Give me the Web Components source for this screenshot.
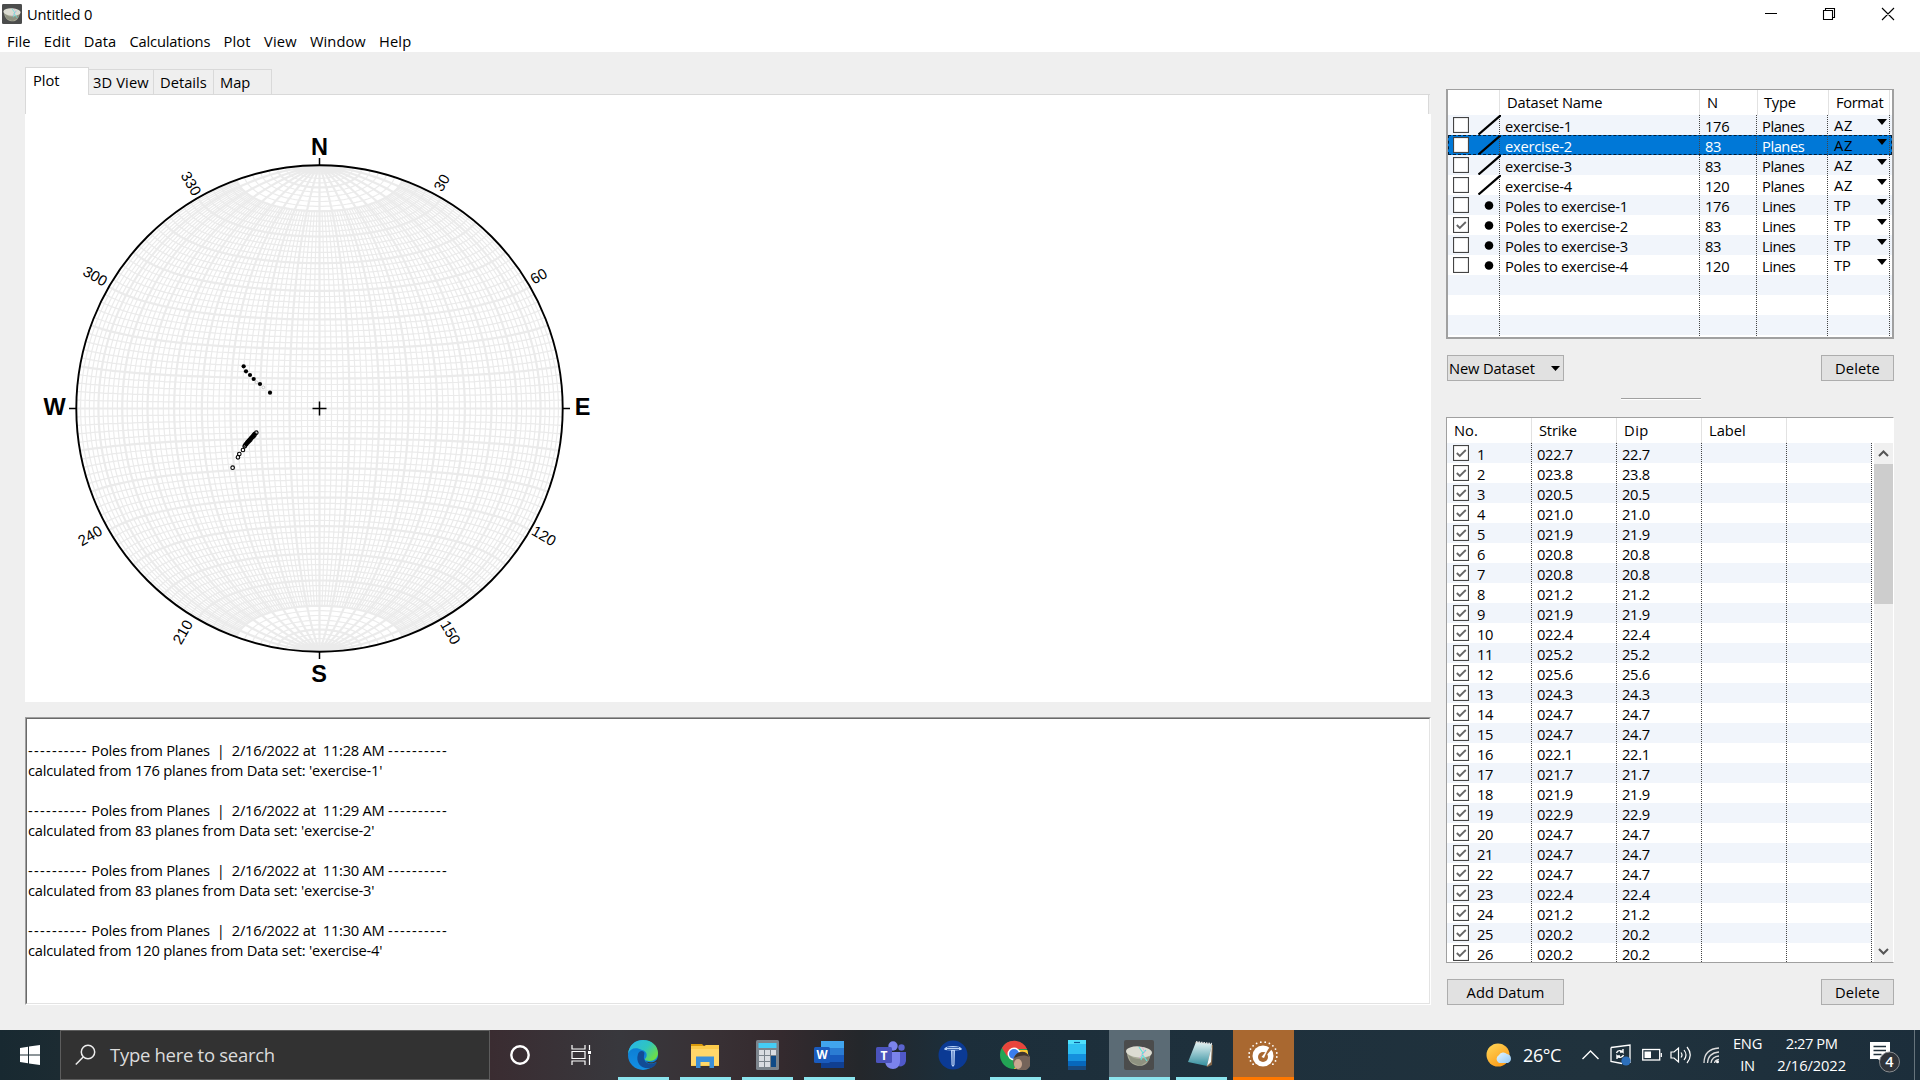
<!DOCTYPE html>
<html lang="en">
<head>
<meta charset="utf-8">
<title>Untitled 0</title>
<style>
html,body{margin:0;padding:0;width:1920px;height:1080px;overflow:hidden}
body{font-family:"Open Sans","Noto Sans",sans-serif;font-size:14.7px;color:#000;background:#efefef}
</style>
</head>
<body>
<stereo-app></stereo-app>
<script>
const define = (name, html, init) => {
  const tpl = document.createElement('template');
  customElements.define(name, class extends HTMLElement {
    connectedCallback() {
      if (this.shadowRoot) return;
      tpl.innerHTML = typeof html === 'function' ? html(this) : html;
      this.attachShadow({mode: 'open'}).append(tpl.content.cloneNode(true));
      if (init) init(this);
    }
  });
};

define('stereo-app', `<style>
:host{display:flex;flex-direction:column;width:1920px;height:1080px;background:#efefef}
main{flex:1;display:flex;padding:15px 25px 0 25px;gap:15px}
.left{width:1406px;display:flex;flex-direction:column}
.right{width:449px;display:flex;flex-direction:column;padding-top:22px}
.bar{display:flex;justify-content:space-between;width:447px;margin-left:1px}
.split{width:80px;height:1px;background:#a0a0a0;border-bottom:1px solid #fff;margin:17px 0 17px 175px}
</style>
<window-bar></window-bar>
<main>
 <div class="left"><tab-strip></tab-strip><stereo-net></stereo-net><console-log></console-log></div>
 <div class="right">
  <dataset-table></dataset-table>
  <div class="bar" style="margin-top:16px"><push-button style="--w:117px" menu><fit-text w="85">New Dataset</fit-text></push-button><push-button style="--w:73px"><fit-text w="44">Delete</fit-text></push-button></div>
  <div class="split"></div>
  <datum-table></datum-table>
  <div class="bar" style="margin-top:16px"><push-button style="--w:117px"><fit-text w="77">Add Datum</fit-text></push-button><push-button style="--w:73px"><fit-text w="44">Delete</fit-text></push-button></div>
 </div>
</main>
<task-bar></task-bar>`);

const bowl = (s) => `<svg width="${s}" height="${s}" viewBox="0 0 30 30" style="display:block"><rect width="30" height="30" rx="2" fill="#4b4c4c"/><path d="M3 12c0 9 6 14 13 14 6 0 10-5 11-14z" fill="#a9ab98"/><path d="M3 12c4 6 8 7 13 7s9-2 11-7l-3 9-8 5-9-4z" fill="#7f8272" opacity=".6"/><ellipse cx="15" cy="12" rx="13" ry="5.6" fill="#dcdcd2" transform="rotate(4 15 12)"/><path d="M15 7l4 6-2 7M22 10l-4 4 5 7" stroke="#5fe0dc" stroke-width="1.1" fill="none"/><path d="M18 7l3 5-6 6" stroke="#d9a8d8" stroke-width=".8" fill="none"/></svg>`;

define('window-bar', `<style>
:host{display:block;height:52px;background:#fff}
.title{display:flex;align-items:center;height:28px;padding-left:2px}
.title fit-text{margin-left:5px;margin-bottom:1px}
.ctl{margin-left:auto;margin-right:14px}
nav{display:flex;height:24px;align-items:center;padding:1px 0 0 7px;margin-bottom:-1px}
nav fit-text{margin-right:13.2px}
</style>
<div class="title">${bowl(20)}<fit-text w="64.500">Untitled 0</fit-text>
<svg class="ctl" width="146" height="20" viewBox="0 0 146 20" fill="none" stroke="#000" stroke-width="1.100"><path d="M5 9.500h12M63.500 6.500h9v9h-9zM65.500 6.500v-2h9v9h-2M122 4l12 12m0-12l-12 12"/></svg></div>
<nav><fit-text w="22.800">File</fit-text><fit-text w="26">Edit</fit-text><fit-text w="31.700">Data</fit-text><fit-text w="80">Calculations</fit-text><fit-text w="26.500">Plot</fit-text><fit-text w="32">View</fit-text><fit-text w="55">Window</fit-text><fit-text w="31.500">Help</fit-text></nav>`);

define('tab-strip', `<style>
:host{display:block;height:28px}
div{display:flex;align-items:flex-end}
span{box-sizing:border-box;height:26px;border:1px solid #d9d9d9;border-left:0;display:flex;align-items:center;padding:0 0 1px 6px}
.on{height:28px;width:64px;background:#fff;border-left:1px solid #d9d9d9;border-bottom:0;padding:0 0 4px 7px}
i{flex:1;border-bottom:1px solid #d9d9d9;height:0;margin-right:1px}
</style>
<div><span class="on"><fit-text w="25.500">Plot</fit-text></span><span style="width:65px;padding-left:4px"><fit-text w="55">3D View</fit-text></span><span style="width:60px"><fit-text w="46">Details</fit-text></span><span style="width:58px"><fit-text w="29.500">Map</fit-text></span><i></i></div>`);

const CX = 294.5, CY = 313.5, R = 243.2;
const project = (pitch, dip) => {
  const p = pitch * Math.PI / 180, d = dip * Math.PI / 180;
  const n = Math.cos(p), e = Math.sin(p) * Math.cos(d), k = Math.sqrt(1 + Math.sin(p) * Math.sin(d));
  return (CX + R * e / k).toFixed(2) + ' ' + (CY - R * n / k).toFixed(2);
};
const great = (d, a, b) => { let s = ''; for (let p = a; p <= b; p += 2) s += (s ? 'L' : 'M') + project(p, d); return s; };
const small = (p) => { let s = ''; for (let d = 0; d <= 180; d += 3) s += (s ? 'L' : 'M') + project(p, d); return s; };
function netSvg() {
  let minor = '', major = '';
  for (let a = 2; a < 180; a += 2) {
    if (a % 10) minor += great(a, 20, 160) + small(a);
    else major += great(a, 0, 180) + small(a);
  }
  const labels = [[441.500,182.500,-60,'30'],[538.500,276,-30,'60'],[544,535.700,30,'120'],[450.700,632.300,60,'150'],[182.500,632,-60,'210'],[90,535.500,-30,'240'],[95.300,276,30,'300'],[191.300,183.500,60,'330']]
    .map(([x, y, r, t]) => `<text transform="translate(${x - 25} ${y - 95}) rotate(${r})" y="5.400" font-size="15">${t}</text>`).join('');
  const cards = [[319.500,146.700,'N'],[54.700,406.500,'W'],[582.500,407,'E'],[319,673.500,'S']]
    .map(([x, y, t]) => `<text x="${x - 25}" y="${y - 95 + 8.3}" font-size="23.500" font-weight="bold">${t}</text>`).join('');
  const filled = [[131,79],[138,94],[150,105],[161,117],[180,132],[210,158]].map(([x, y]) => `<circle cx="${175 + x / 3}" cy="${245 + y / 3}" r="2.100"/>`).join('');
  const faint = [[170,127],[190,142]].map(([x, y]) => `<circle cx="${175 + x / 3}" cy="${245 + y / 3}" r="1.400" fill="none" stroke="#aaa" stroke-width=".6"/>`).join('');
  const open = [[168,278],[163,284],[160,288],[157,291],[153,295],[150,299],[147,302],[144,305],[141,308],[138,312],[135,316],[133,319],[128,330],[117,342],[113,352],[97,383]]
    .map(([x, y]) => `<circle cx="${175.3 + x / 3}" cy="${245 + y / 3}" r="1.800" fill="none" stroke="#000" stroke-width="1.100"/>`).join('');
  return `<svg width="600" height="607" font-family="Liberation Sans,sans-serif" text-anchor="middle">
<g fill="none" stroke="#ebebeb"><path d="${minor}" stroke-width="1.200"/><path d="${major}M${CX} ${CY - R}V${CY + R}M${CX - R} ${CY}H${CX + R}" stroke-width="2.200"/></g>
<circle cx="${CX}" cy="${CY}" r="${R}" fill="none" stroke="#000" stroke-width="1.900"/>
<path d="M${CX} 63v7M${CX} 557v7M44 ${CY}h7M538 ${CY}h7M${CX - 7} ${CY}h14M${CX} ${CY - 7}v14" stroke="#000" stroke-width="1.500"/>
${cards}${labels}${faint}${filled}<path d="M230 338L220 350" stroke="#000" stroke-width="3.600"/>${open}</svg>`;
}
define('stereo-net', () => `<style>:host{display:block;height:607px;background:#fff;width:1406px}
:host::before{content:"";display:block;float:right;width:2px;height:19px;background:#efefef;border-left:1px solid #d9d9d9}
svg{display:block}
.edge{box-shadow:inset 1px 0 #d9d9d9;width:3px;height:19px;margin-bottom:-19px}
</style><div class="edge"></div>${netSvg()}`);

define('console-log', () => {
  const e = [['11:28', 176, 1], ['11:29', 83, 2], ['11:30', 83, 3], ['11:30', 120, 4]];
  return `<style>:host{display:block;box-sizing:border-box;width:1406px;height:288px;margin-top:15px;background:#fff;border:solid;border-width:1px;border-color:#a0a0a0 #fff #fff #a0a0a0}
.in{box-sizing:border-box;height:286px;border:solid 1px;border-color:#696969 #e3e3e3 #e3e3e3 #696969;padding:1px 0 0 1px}
p{margin:0;padding-top:20px;line-height:20px}p>span{display:flex;height:20px}
</style><div class="in">${e.map(([t, n, i]) => `<p><span><fit-text w="59">----------</fit-text><fit-text w="299.500"> Poles from Planes  |  2/16/2022 at  ${t} AM </fit-text><fit-text w="59">----------</fit-text></span><span><fit-text w="${n > 99 ? 353.5 : 345.5}">calculated from ${n} planes from Data set: 'exercise-${i}'</fit-text></span></p>`).join('')}</div>`;
});

define('push-button', (h) => `<style>:host{display:flex;box-sizing:border-box;width:var(--w);height:26px;border:1px solid #adadad;background:#e1e1e1;align-items:center;justify-content:${h.hasAttribute('menu') ? 'space-between;padding:0 3px 0 1px' : 'center'}}</style><slot></slot>${h.hasAttribute('menu') ? '<svg width="9" height="5"><path d="M0 0h9L4.500 5z"/></svg>' : ''}`);

define('check-box', (h) => `<style>:host{display:block;width:16px;height:16px}svg{display:block}</style>
<svg width="16" height="16"><rect x=".5" y=".5" width="15" height="15" fill="#fff" stroke="#444" stroke-width="1.200"/>${h.hasAttribute('on') ? '<path d="M3.800 8l3 3L12.800 5" fill="none" stroke="#666" stroke-width="1.800"/>' : ''}</svg>`);

const tableCss = `
.head{display:grid;height:25px;background:#fff;line-height:24px}
.head>*{box-sizing:border-box;border-right:1px solid #e2e2e2}
.row{display:grid;height:20px;line-height:23px;letter-spacing:-.32px}
.row>*{box-sizing:border-box;height:20px;background:repeating-linear-gradient(#444 0 1px,transparent 1px 2px) right/1px 100% no-repeat}
.row:nth-child(odd){background-color:#f1f5fb}
.row:nth-child(even){background-color:#fff}`;

define('dataset-table', () => {
  const rows = [['exercise-1',176],['exercise-2',83],['exercise-3',83],['exercise-4',120],['Poles to exercise-1',176],['Poles to exercise-2',83],['Poles to exercise-3',83],['Poles to exercise-4',120],[],[],[],[]];
  const body = rows.map(([name, n], i) => {
    if (!name) return '<div class="row"><span></span><span></span><span></span><span></span><span></span></div>';
    const plane = i < 4;
    return `<div class="row${i === 1 ? ' sel' : ''}"><span class="sym"><check-box ${i === 5 ? 'on' : ''}></check-box>${plane ? '<svg width="23" height="20"><path d="M.500 19.500L23 0" stroke="#000" stroke-width="2.200"/></svg>' : '<svg width="23" height="20"><circle cx="11" cy="10.500" r="4.300"/></svg>'}</span><span class="t"><fit-text w="${plane ? 66 : 122}">${name}</fit-text></span><span class="t">${n}</span><span class="t"><fit-text w="${plane ? 41.5 : 32.5}">${plane ? 'Planes' : 'Lines'}</fit-text></span><span class="t f"><fit-text w="${plane ? 18.5 : 16}">${plane ? 'AZ' : 'TP'}</fit-text><svg width="10" height="6"><path d="M0 0h10L5 6z"/></svg></span></div>`;
  }).join('');
  return `<style>:host{display:block;box-sizing:border-box;width:448px;height:250px;border:1px solid #a0a0a0;border-width:1px 2px 2px 2px;overflow:hidden;background:#fff}${tableCss}
.head{grid-template-columns:52px 200px 58px 71px 61px}
.row{grid-template-columns:52px 200px 57px 71px 62px}
.head span{padding-left:7px}
.sym{display:flex}.sym check-box{margin:2px 9px 0 5px}.sym svg{margin-right:-1px}
.t{padding-left:5px}.f{display:flex;justify-content:space-between;line-height:21px;padding:0 3px 0 6px}.f svg{margin-top:4px}
.row.sel{background:#0078d7;color:#fff;outline:1px dashed #001d38;outline-offset:-1px}
.sel .f{color:#000}
</style><div class="head"><span></span><span><fit-text w="94.500">Dataset Name</fit-text></span><span>N</span><span style="padding-left:6px"><fit-text w="31">Type</fit-text></span><span><fit-text w="46.500">Format</fit-text></span></div><div>${body}</div>`;
});

define('datum-table', () => {
  const v = '22.7 23.8 20.5 21.0 21.9 20.8 20.8 21.2 21.9 22.4 25.2 25.6 24.3 24.7 24.7 22.1 21.7 21.9 22.9 24.7 24.7 24.7 22.4 21.2 20.2 20.2'.split(' ');
  return `<style>:host{display:block;box-sizing:border-box;width:448px;height:546px;border:1px solid #a0a0a0;border-right-color:#fff;background:#fff}${tableCss}
.head{grid-template-columns:85px 85px 85px 85px 1fr}.head span{padding-left:7px}.head span:last-child{border:0}
.body{display:flex;height:519px}
.rows{width:425px}
.row{grid-template-columns:85px 85px 85px 85px 85px}
.row span{padding-left:5px}
.row:last-child,.row:last-child>*{height:19px}
.row .n{display:flex;padding-left:6px}.n check-box{margin:2px 8px 0 0}
.sb{margin-left:auto;width:19px;background:#f0f0f0;display:flex;flex-direction:column}
.thumb{height:140px;background:#cdcdcd}
svg{display:block}
</style><div class="head"><span><fit-text w="23">No.</fit-text></span><span><fit-text w="37">Strike</fit-text></span><span><fit-text w="24">Dip</fit-text></span><span><fit-text w="36">Label</fit-text></span><span></span></div>
<div class="body"><div class="rows">${v.map((x, i) => `<div class="row"><span class="n"><check-box on></check-box>${i + 1}</span><span>0${x}</span><span>${x}</span><span></span><span></span></div>`).join('')}</div>
<div class="sb"><svg width="19" height="21"><path d="M5 13l4.500-4.500L14 13" fill="none" stroke="#555" stroke-width="2"/></svg><div class="thumb"></div><svg width="19" height="21" style="margin-top:auto"><path d="M5 8l4.500 4.500L14 8" fill="none" stroke="#555" stroke-width="2"/></svg></div></div>`;
});

define('task-item', `<style>:host{display:flex;box-sizing:border-box;width:62px;height:50px;align-items:center;justify-content:center;border:0 solid transparent}
:host([run]){background:linear-gradient(#8be4ee,#8be4ee) 50% 100%/51px 3px no-repeat}
:host([active]){background:linear-gradient(#8be4ee,#8be4ee) 50% 100%/61px 3px no-repeat,linear-gradient(#5b6b75,#5b6b75) 50%/61px 50px no-repeat}
:host([alert]){background:linear-gradient(#ff7800,#ff7800) 50% 100%/61px 3px no-repeat,linear-gradient(#a96830,#a96830) 50%/61px 50px no-repeat}
</style><slot></slot>`);

define('task-bar', () => {
  const ic = (b, w = 30) => `<svg width="${w}" height="30" viewBox="0 0 ${w} 30">${b}</svg>`;
  const txt = (t, x, y, s, a = 'middle') => `<text x="${x}" y="${y}" font-size="${s}" text-anchor="${a}" fill="#fff" font-weight="bold">${t}</text>`;
  let dots = '';
  for (let k = 0; k < 16; k++) { const a = (k * 18 + 135) * Math.PI / 180; dots += `<circle cx="${(15 + 14 * Math.cos(a)).toFixed(1)}" cy="${(15 + 13 * Math.sin(a)).toFixed(1)}" r=".9"/>`; }
  return `<style>:host{display:flex;height:50px;color:#fff;background:linear-gradient(90deg,#182931 0,#1c2b32 60px,#3a2c31 490px,#38383d 620px,#383034 720px,#342a2e 780px,#24272b 860px,#1c2e3a 950px,#1e303c 1200px,#20323d 1600px,#1c2e3b 1920px)}
.start{width:60px;display:flex;align-items:center;justify-content:center}
.search{box-sizing:border-box;width:430px;border:1px solid #5d5d5d;background:#323232;display:flex;align-items:center;color:#dcdcdc;font-size:18.500px;padding-left:14px;gap:14px}
.search fit-text{margin-bottom:1px}
.apps{display:flex}
.tray{margin-left:auto;display:flex;align-items:center}
.two{display:flex;flex-direction:column;align-items:center;line-height:22px;height:46px}
svg{display:block}
</style>
<div class="start"><svg width="20" height="20" fill="#fff"><path d="M0 3l8-1.200v7.700H0zM9 1.600L20 0v9.500H9zM0 10.500h8v7.700L0 17zM9 10.500h11V20L9 18.400z"/></svg></div>
<div class="search"><svg width="21" height="22" fill="none" stroke="#eee" stroke-width="1.500"><circle cx="13" cy="8" r="6.700"/><path d="M8.200 13L.800 20.500"/></svg><fit-text w="164">Type here to search</fit-text></div>
<div class="apps" style="margin-left:-1px">
<task-item>${ic('<circle cx="15" cy="15" r="8.700" fill="none" stroke="#fff" stroke-width="2.400"/>')}</task-item>
<task-item style="width:61px">${ic('<path d="M5 5v4h13V5M5 25v-4h13v4M5 11.500h13v7H5zM22.500 5v5M22.500 15v10" fill="none" stroke="#fff" stroke-width="1.200"/><rect x="21" y="11" width="3" height="3" fill="#fff"/>')}</task-item>
<task-item run>${ic('<defs><linearGradient id="e" x2="1" y2=".6"><stop stop-color="#28b5ec"/><stop offset=".6" stop-color="#2fc5c0"/><stop offset="1" stop-color="#6bdc4b"/></linearGradient><linearGradient id="e2" x2="0" y2="1"><stop stop-color="#0b78cf"/><stop offset="1" stop-color="#1390e3"/></linearGradient></defs><circle cx="15" cy="15" r="15" fill="url(#e2)"/><path d="M0 14C1 5 7 0 15 0c9 0 15 6 15 13 0 5-4 8-8 8-3 0-6-1-5-2 3-3 2-8-3-9C8 7 2 8 0 14z" fill="url(#e)"/><path d="M10 14c-3 9 4 16 13 14 3-1 5-3 6-6-5 3-12 2-13-3-.6-3 1-5 0-7-2-2-5-1-6 2z" fill="#124c95"/><path d="M30 17c-1 4-5 6-9 5-3 0-5-1-5-3 2 5 9 6 14 2z" fill="#363136"/>')}</task-item>
<task-item run>${ic('<path d="M1 4h11l3 3h-14z" fill="#d99a0b"/><path d="M1 6h13l2-1h13v21H1z" fill="#fccb4b"/><path d="M1 9h28v16H1z" fill="#ffd76a"/><path d="M6 28V16.500h18V28h-4.500v-6h-9v6z" fill="#3a8fd9"/>')}</task-item>
<task-item run>${ic('<rect width="23" height="30" rx="1.500" fill="#7b848c"/><rect x="2.500" y="3" width="18" height="5" fill="#45cdf5"/><g fill="#d9dde2"><path d="M3 10h5v5H3zM9 10h5v5H9zM15 10h5v5h-5zM3 16h5v5H3zM9 16h5v5H9zM3 22h5v5H3zM9 22h5v5H9z"/></g><path d="M15 16h5v11h-5z" fill="#0f4a86"/>', 23)}</task-item>
<task-item run>${ic('<rect x="7" y="1" width="23" height="27" rx="1" fill="#2b7cd3"/><path d="M7 1h23v7H7z" fill="#41a5ee"/><path d="M7 15h23v7H7z" fill="#185abd"/><path d="M7 22h23v6H7z" fill="#103f91"/><rect y="7" width="16" height="16" rx="1.500" fill="#1a5bbd"/>' + txt('W', 8, 19, 11.5))}</task-item>
<task-item>${ic('<circle cx="17" cy="6" r="4.700" fill="#7b83eb"/><circle cx="25.500" cy="7.500" r="3.200" fill="#5b64cf"/><path d="M20 12h10v9a6 6 0 0 1-8 5z" fill="#5059c9"/><path d="M9 12h15v9c0 5-3 8-7 8s-8-3-8-8z" fill="#7b83eb"/><rect y="7" width="16" height="16" rx="1.500" fill="#4b53bc"/>' + txt('T', 8, 19.5, 12))}</task-item>
<task-item>${ic('<circle cx="15" cy="15" r="14.500" fill="#0b3a94"/><path d="M6 9c1-2 4-3 9-3s8 1 9 3l-1 1-6 .500L16.500 25 15 27l-1.500-2L13 10.500 7 10z" fill="#b9d2f6"/><path d="M9 7.500h12M9 9.500h12M15 11v14" stroke="#0b3a94" stroke-width=".7"/>')}</task-item>
<task-item run>${ic('<circle cx="14" cy="15" r="14" fill="#23a455"/><path d="M2 8A14 14 0 0 1 27 9H14l-7 7z" fill="#e8453c"/><path d="M27.300 10A14 14 0 0 1 14 29l6-11-1-8z" fill="#fcc934"/><circle cx="14" cy="14" r="6.500" fill="#fff"/><circle cx="14" cy="14" r="5" fill="#3b7ded"/><ellipse cx="22" cy="21.500" rx="9" ry="9.500" fill="#75645a"/><path d="M14 18c3-8 13-8 15-1-5-3-10-1-15 1z" fill="#403630"/><ellipse cx="18" cy="24" rx="4" ry="5" fill="#c9a891"/>')}</task-item>
<task-item>${ic('<rect width="18" height="30" rx="1" fill="#2fc0f2"/><path d="M0 0h18v4H0z" fill="#4fe0fc"/><path d="M0 14h18v7H0z" fill="#1590dd"/><path d="M0 21h18v5H0z" fill="#0768bd"/><path d="M0 26h18v4H0z" fill="#174a80"/><path d="M6 2.500h6" stroke="#0b5a9a" stroke-width="1.200"/>', 18)}</task-item>
<task-item active>${bowl(30)}</task-item>
<task-item run>${ic('<defs><linearGradient id="n" x2="0" y2="1"><stop stop-color="#e6f4f5"/><stop offset="1" stop-color="#35909f"/></linearGradient></defs><path d="M9 2l18 3-1 20-5 2z" fill="#806447"/><path d="M10 2l16 2-5 22L2 22z" fill="url(#n)"/><path d="M21 26l5-22-1 18z" fill="#eef6f7"/><path d="M10 2l16 2" stroke="#ddd" stroke-width="2" stroke-dasharray="1.500 1"/>')}</task-item>
<task-item alert>${ic('<g fill="#fff">' + dots + '<circle cx="15" cy="16" r="10.500"/></g><circle cx="15" cy="17" r="5" fill="#a96830"/><path d="M14 17L22 7l2 2-8 9z" fill="#a96830"/><path d="M13.500 17L20 9l-4 9z" fill="#fff"/>')}</task-item>
</div>
<div class="tray">
<svg width="26" height="26" style="margin-right:11px"><defs><linearGradient id="s" x2=".7" y2="1"><stop stop-color="#ffd95b"/><stop offset="1" stop-color="#fb9a17"/></linearGradient><linearGradient id="c" x2="1" y2="1"><stop stop-color="#e5f6ff"/><stop offset="1" stop-color="#94c9f4"/></linearGradient></defs><circle cx="12" cy="13" r="11.500" fill="url(#s)"/><path d="M13 21a4.500 4.500 0 0 1 0-8 5 5 0 0 1 8-1 4.700 4.700 0 0 1 1 9z" fill="url(#c)"/></svg>
<fit-text w="37" style="font-size:18px;margin-right:21px">26°C</fit-text>
<svg width="17" height="20" style="margin-right:11px" fill="none" stroke="#fff" stroke-width="1.400"><path d="M.500 14L8.500 6l8 8"/></svg>
<svg width="22" height="24" style="margin-right:10px" fill="none" stroke="#fff" stroke-width="1.300"><path d="M1 4.500L20 2v18M1 4.500v14l11 2"/><path d="M6.500 10c1-3 5-3 6.500-1V6M13 9h-3M13.500 12c-1 3-5 3-6.500 1v3M7 13h3" stroke-width="1.400"/><circle cx="16" cy="18" r="4.600" fill="#2c6fbb" stroke="none"/></svg>
<svg width="20" height="14" style="margin-right:8px" fill="none" stroke="#fff" stroke-width="1.300"><rect x=".7" y="1.500" width="17" height="10.500"/><path d="M19.300 5v4"/><path d="M2.500 3.500h6.500v6.500H2.500z" fill="#fff" stroke="none"/></svg>
<svg width="22" height="20" style="margin-right:11px" fill="none" stroke="#fff" stroke-width="1.200"><path d="M1 7h3l4.500-4v14L4 13H1zM11 7.500q2 2.500 0 5M14 5q4 5 0 10M17 2q6.500 8 0 16"/></svg>
<svg width="18" height="18" style="margin-right:12px" fill="none" stroke="#ddd" stroke-width="1.300"><path d="M1 17Q1 3 16 2M4.500 17Q5 7 16 6M8 17Q9 10.500 16 10M11.500 17q.500-3 4.500-3.500"/><circle cx="14.500" cy="15.700" r="1.500" fill="#fff" stroke="none"/></svg>
<div class="two" style="margin-right:15px"><fit-text w="28.500">ENG</fit-text><fit-text w="14">IN</fit-text></div>
<div class="two" style="margin-right:23px"><fit-text w="51">2:27 PM</fit-text><fit-text w="68">2/16/2022</fit-text></div>
<svg width="32" height="34" style="margin-right:13px;margin-top:6px"><path d="M1 1h20v17h-7v5l-5-5H1z" fill="#fff"/><path d="M4.500 5.500h12.500M4.500 9.500h12.500M4.500 13.500h8" stroke="#20303b" stroke-width="1.300"/><circle cx="20.500" cy="21" r="10" fill="#30343a" stroke="#8a8d90"/><text x="20.500" y="26.300" font-size="14.500" font-weight="600" fill="#fff" text-anchor="middle">4</text></svg>
<span style="width:1px;height:50px;background:#66747c;margin-right:5px"></span>
</div>`;
});

// Sets the tracking so that a run of text takes a given width.
customElements.define('fit-text', class extends HTMLElement {
  connectedCallback() {
    if (this.shadowRoot) return;
    this.attachShadow({mode: 'open'}).innerHTML = '<style>:host{display:inline-block;white-space:pre;letter-spacing:0}</style><slot></slot>';
    const w = this.getBoundingClientRect().width, n = this.textContent.length;
    this.style.letterSpacing = ((+this.getAttribute('w') + .8 - w) / n).toFixed(3) + 'px';
  }
});
</script>
</body>
</html>
